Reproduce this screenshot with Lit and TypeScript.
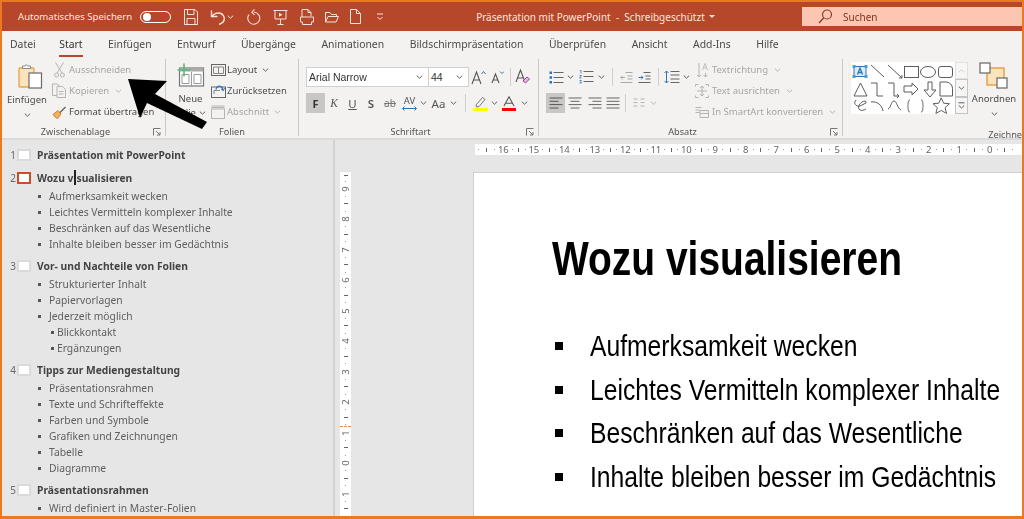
import { LitElement, html, css, svg } from "lit";
import { customElement } from "lit/decorators.js";

const D = "#5c5c5c";
const G = "#b4b4b4";
const ico = (w: number, h: number, body: unknown) =>
  html`<svg class="ico" width=${w} height=${h} viewBox="0 0 ${w} ${h}" fill="none" stroke-width="1">${body}</svg>`;
const caret = (c = D) => ico(7, 4, svg`<path d="M.8.6 3.5 3.2 6.2.6" stroke=${c}/>`);

const W = "#f6e4dc";
const qa = {
  save: ico(14, 16, svg`<path d="M.5.5h10.5l2.500 2.500v12.500H.5z M3.500 1v4.500h6.500V1 M3 15v-5.500h8V15" stroke=${W}/>`),
  undo: ico(17, 16, svg`<path d="M1.500 1.500v6h6 M2 7.500c3-4.500 10-5 12 .5 1 3-1 6-5 7.500" stroke=${W} stroke-width="1.400"/>`),
  redo: ico(14, 16, svg`<path d="M7 3.200a6 6 0 1 1-5 2.400 M7.500.5 4.800 3.200l2.700 2.700" stroke=${W} stroke-width="1.100"/>`),
  show: ico(15, 16, svg`<path d="M.5 1.500h14 M2 1.500v8.500h11V1.500 M7.500 10v5 M4.500 15.500h6" stroke=${W}/><path d="M6 3.800 9.500 5.800 6 7.800z" fill=${W}/>`),
  print: ico(14, 16, svg`<path d="M2 8V.5h6l3 3V7 M8 .5v3h3 M.5 8h13v5h-2v2.500h-9V13h-2z" stroke=${W}/>`),
  open: ico(14, 12, svg`<path d="M.5 11V1.500h4.500l1.500 2h5v2 M.5 11l2.500-5.500h10.500L11 11z" stroke=${W}/>`),
  file: ico(11, 15, svg`<path d="M.5.5h6l4 4v10H.5z M6.500.5v4h4" stroke=${W}/>`),
  more: ico(8, 8, svg`<path d="M1 1h6 M1.500 4l2.500 2.500L6.500 4" stroke=${W}/>`),
  glass: ico(14, 15, svg`<circle cx="9" cy="5.500" r="4.500" stroke="#8a3b25" stroke-width="1.200"/><path d="M5.800 8.800 1 14" stroke="#8a3b25" stroke-width="1.400"/>`),
};

const rib = {
  paste: html`<svg class="ico" width="25" height="25" viewBox="0 0 25 25" fill="none">
    <rect x="1" y="4" width="15" height="19" rx="1" fill="#fbe3bb" stroke="#e6a24a" stroke-width="1.300"/>
    <path d="M4.500 4.500V2H7l1.200-1.500L9.500 2H12.500v2.500z" fill="#fff" stroke="#8a8a8a"/>
    <rect x="11" y="9" width="12.500" height="15" fill="#fff" stroke="#6a6a6a" stroke-width="1.200"/></svg>`,
  cut: ico(11, 16, svg`<path d="M1.500.5 8 11 M9.500.5 3 11" stroke=${G}/><circle cx="2.600" cy="13" r="2" stroke=${G}/><circle cx="8.400" cy="13" r="2" stroke=${G}/>`),
  copy: ico(14, 15, svg`<path d="M.5 1h5l2 2v9.500H.5z" stroke=${G}/><path d="M5 3.500h5.500l3 3v8H5z" fill="#f3f2f1" stroke=${G}/><path d="M7 8.500h4.500M7 11h4.500" stroke=${G}/>`),
  brush: ico(15, 14, svg`<path d="M7 7.500 13 1.500l1 1-6 6z" fill="#666"/><path d="M1 9.500 6 5.500l3 3.500-3.500 4.500C4 13 2 11 1 9.500z" fill="#f3b05e" stroke="#b86f1d" stroke-width=".8"/>`),
  slide: ico(28, 24, svg`<rect x="2.500" y="5" width="24" height="18" fill="#fff" stroke="#777" stroke-width="1.200"/><rect x="2.500" y="5" width="24" height="3.500" fill="#aaa"/><path d="M14.500 9v14M5 11.500h7v9H5zM17 11.500h7v9h-7z" stroke="#9a9a9a"/><path d="M7 .5v13M.5 7h13" stroke="#5fb57c" stroke-width="1.600"/>`),
  layout: ico(15, 12, svg`<rect x=".5" y=".5" width="14" height="11" stroke="#666"/><path d="M2.500 3h10v6.500h-10zM7.500 3v6.500" stroke="#888"/>`),
  reset: ico(15, 14, svg`<rect x=".5" y="3" width="14" height="10.500" stroke="#666"/><path d="M3 10V6.500h6" stroke="#888"/><path d="M5 5.500c0-3 4-4.500 6-2l1 2.500" stroke="#2e75b6" stroke-width="1.300"/><path d="M10 5l2.300 1.800L13.500 4" stroke="#2e75b6"/>`),
  section: ico(14, 14, svg`<rect x=".5" y="4" width="13" height="9.500" stroke=${G}/><path d="M.5 1h13M.5 2.500h13" stroke=${G}/>`),
  grow: ico(15, 15, svg`<path d="M1 14 5.500 2 10 14M2.700 10h5.600" stroke="#555" stroke-width="1.100"/><path d="M10.500 4 12.500 1.500 14.500 4" stroke="#2e75b6"/>`),
  shrink: ico(13, 14, svg`<path d="M1 13 4.500 4 8 13M2.300 10h4.400" stroke="#555" stroke-width="1.100"/><path d="M9 1.500 11 3.500 13 1.500" stroke="#2e75b6"/>`),
  clear: ico(15, 16, svg`<path d="M1 13 5.500 1 10 13M2.700 9h5.600" stroke="#555" stroke-width="1.100"/><path d="M8 12l4-4 2.500 2-4 4z" fill="#e3b6e0" stroke="#a640a0"/>`),
  strike: html`<span class="strike">ab</span>`,
  av: html`<span class="avw"><span>AV</span>${ico(15, 5, svg`<path d="M.5 2.500h14M2.500.5l-2 2 2 2M12.500.5l2 2-2 2" stroke="#2e75b6"/>`)}</span>`,
  hl: ico(15, 15, svg`<path d="M3 9 9.500 1.500l2.500 2L6 10.500 3.500 11z" stroke="#777"/><rect y="12" width="15" height="3" fill="#ffff00"/>`),
  color: ico(14, 15, svg`<path d="M2 10 7 .8l5 9.200M3.600 7.200h6.800" stroke="#555" stroke-width="1.100"/><rect y="12" width="14" height="3" fill="#ff0000"/>`),
  bullets: ico(15, 13, svg`<path d="M4.500 1.500h10M4.500 6.500h10M4.500 11.500h10" stroke="#666"/><path d="M.5.5h2.500v2.500H.5zM.5 5.200h2.500v2.500H.5zM.5 10h2.500v2.500H.5z" fill="#2e75b6"/>`),
  nums: ico(15, 14, svg`<path d="M4.500 1.500h10M4.500 6.500h10M4.500 11.500h10" stroke="#666"/><path d="M.8.5h1.200v3M.5 5.500h2L.5 8h2M.5 10.500h2l-1 1.200 1 1.300h-2" stroke="#2e75b6" stroke-width=".8"/>`),
  dec: ico(13, 11, svg`<path d="M5.500.5h7M7.500 4h5M7.500 7h5M.5 10.500h12" stroke="#aaa"/><path d="M5 5.500H.8M2.500 3.800.8 5.500l1.700 1.700" stroke="#aaa"/>`),
  inc: ico(13, 11, svg`<path d="M5.500.5h7M7.500 4h5M7.500 7h5M.5 10.500h12" stroke="#666"/><path d="M.5 5.500H5M3.300 3.800 5 5.500 3.300 7.200" stroke="#2e75b6"/>`),
  ls: ico(16, 14, svg`<path d="M6.500 1.500h9M6.500 5h9M6.500 9h9M6.500 12.500h9" stroke="#666"/><path d="M2.500 1v12M.5 3l2-2 2 2M.5 11l2 2 2-2" stroke="#2e75b6"/>`),
  td: html`<span class="tdw">${ico(13, 16, svg`<path d="M3 1v14M1 13l2 2 2-2M9.500 11v4M7.500 13l2 2 2-2" stroke=${G}/><path d="M6.500 8 9 1.500 11.500 8M7.400 5.800h3.200" stroke=${G} stroke-width=".8"/>`)}</span>`,
  ta: ico(14, 14, svg`<path d="M.5 2.500V.5h3M10.500.5h3v2M.5 11.500v2h3M10.500 13.500h3v-2M7 2v10M5 4l2-2 2 2M5 10l2 2 2-2M2 7h10" stroke=${G}/>`),
  sa: ico(14, 12, svg`<path d="M.5 1.500h6M.5 4h4M.5 6.500h4" stroke=${G}/><path d="M5 4.500h8.500v7H5zM5 7.500h8.500" stroke=${G}/>`),
  launch: ico(8, 8, svg`<path d="M.5 7.500V.5h7M3 3l4 4M7 4v3H4" stroke="#777"/>`),
  arrange: ico(32, 28, svg`<rect x="9" y="6" width="17" height="17" fill="#fbe3bb" stroke="#e6953a" stroke-width="1.300"/><rect x="2" y="1" width="10" height="10" fill="#fff" stroke="#666" stroke-width="1.200"/><rect x="19" y="16" width="10" height="10" fill="#fff" stroke="#666" stroke-width="1.200"/>`),
};

const gallery = html`<svg class="ico" width="104" height="52" viewBox="0 0 104 52" fill="none" stroke="#5c5c5c">
  <rect width="104" height="52" fill="#fff" stroke="none"/>
  <rect x="3" y="4.500" width="12" height="10" fill="#dcebf7" stroke="#2e75b6"/>
  <path d="M1.500 3h3v3h-3zM13.500 3h3v3h-3zM1.500 13h3v3h-3zM13.500 13h3v3h-3z" fill="#4a9bdc" stroke="none"/>
  <path d="M6.500 12.500 9 6l2.500 6.500M7.400 10.500h3.200" stroke="#2e75b6" stroke-width="1.300"/>
  <path d="M20 3l13 12M37 3l14 13M48 16h3v-3"/>
  <rect x="53.500" y="4.500" width="14" height="11"/>
  <ellipse cx="77" cy="10" rx="7.500" ry="5.500"/>
  <rect x="87.500" y="4.500" width="14" height="11" rx="2.500"/>
  <path d="M3 34 9.500 21 16 34zM20 21h6v13h6M37 21h6v13h5M46 32l2 2-2 2M53 24h8v-3l6 6-6 6v-3h-8zM77 20v8h-4l6 7 6-7h-4v-8zM89 20h6a6.500 6.500 0 0 1 6.500 6.500V34H89z"/>
  <path d="M5 38c-3 3 0 7 4 6l6-3c1-1-1-3-4-1-3 2-5 6-2 8 2 1 4 0 6-1M20 40c6-1 11 3 12 9M37 47c3-1 3-8 6-8s3 7 7 9" />
  <path d="M59 38c-3 0-1 5-2.500 6 1.500 1-.5 6 2.500 6M70 38c3 0 1 5 2.500 6-1.500 1 .5 6-2.500 6"/>
  <path d="M93 37l2.500 5.500 6 .5-4.500 4 1.500 6-5.500-3-5.500 3 1.500-6-4.500-4 6-.5z" transform="scale(.97)"/>
</svg>`;

const OUT = [
  { t: "Präsentation mit PowerPoint" },
  { t: "Wozu visualisieren", cur: true, b: ["Aufmerksamkeit wecken", "Leichtes Vermitteln komplexer Inhalte", "Beschränken auf das Wesentliche", "Inhalte bleiben besser im Gedächtnis"] },
  { t: "Vor- und Nachteile von Folien", b: ["Strukturierter Inhalt", "Papiervorlagen", "Jederzeit möglich"], s: ["Blickkontakt", "Ergänzungen"] },
  { t: "Tipps zur Mediengestaltung", b: ["Präsentationsrahmen", "Texte und Schrifteffekte", "Farben und Symbole", "Grafiken und Zeichnungen", "Tabelle", "Diagramme"] },
  { t: "Präsentationsrahmen", b: ["Wird definiert in Master-Folien"] },
] as { t: string; cur?: boolean; b?: string[]; s?: string[] }[];

const TABS = ["Datei", "Start", "Einfügen", "Entwurf", "Übergänge", "Animationen", "Bildschirmpräsentation", "Überprüfen", "Ansicht", "Add-Ins", "Hilfe"];
const H_NUMS = [16, 15, 14, 13, 12, 11, 10, 9, 8, 7, 6, 5, 4, 3, 2, 1, 0];
const V_NUMS = [9, 8, 7, 6, 5, 4, 3, 2, 1, 0, 1];
const BULLETS = ["Aufmerksamkeit wecken", "Leichtes Vermitteln komplexer Inhalte", "Beschränken auf das Wesentliche", "Inhalte bleiben besser im Gedächtnis"];

type Cell = [number, unknown, string?];
const F2: Cell[] = [
  [19, html`<b class="fb">F</b>`, "on"], [18, html`<i class="gl it">K</i>`], [19, html`<u class="gl">U</u>`], [18, html`<span class="gl sb">S</span>`],
  [20, rib.strike], [19, rib.av], [8, caret()], [23, html`<span class="gl">Aa</span>`], [7, caret()], [16, html`<span class="vs"></span>`],
  [15, rib.hl], [12, caret()], [18, rib.color], [12, caret()],
];
const P1: Cell[] = [
  [20, rib.bullets], [9, caret()], [22, rib.nums], [9, caret()], [12, html`<span class="vs"></span>`], [17, rib.dec], [19, rib.inc],
  [8, html`<span class="vs"></span>`], [20, rib.ls], [9, caret()],
];
const P2: Cell[] = [
  [19, ico(14, 12, svg`<path d="M.5 1h13M.5 4.300h9M.5 7.600h13M.5 11h9" stroke="#555"/>`), "on"],
  [20, ico(14, 12, svg`<path d="M.5 1h13M2.500 4.300h9M.5 7.600h13M2.500 11h9" stroke="#666"/>`)],
  [19, ico(14, 12, svg`<path d="M.5 1h13M4.500 4.300h9M.5 7.600h13M4.500 11h9" stroke="#666"/>`)],
  [17, ico(14, 12, svg`<path d="M.5 1h13M.5 4.300h13M.5 7.600h13M.5 11h13" stroke="#666"/>`)],
  [8, html`<span class="vs"></span>`],
  [20, ico(12, 10, svg`<path d="M.5 1h4M.5 4.500h4M.5 8h4M7.500 1h4M7.500 4.500h4M7.500 8h4" stroke=${G}/>`)],
  [9, caret(G)],
];

@customElement("app-root")
export class AppRoot extends LitElement {
  static styles = css`
    :host {
      display: block; width: 1024px; height: 519px; box-sizing: border-box; overflow: hidden;
      border: 2px solid #e97a22; border-bottom-width: 3px; position: relative;
      font-family: "Noto Sans", "Open Sans", sans-serif; color: #4a4a4a; background: #f3f2f1;
    }
    .blur { filter: blur(0.35px); height: 100%; display: flex; flex-direction: column; }
    .ico { display: block; flex: none; }
    .bar { height: 29px; flex: none; background: #b7472a; display: flex; align-items: center; color: #f9e6de; font-size: 9.600px; padding-left: 16px; }
    .toggle { width: 31px; height: 12px; box-sizing: border-box; margin-left: 8px; border: 1px solid #fff; border-radius: 7px; display: flex; align-items: center; padding-left: 2px; }
    .toggle i { width: 8px; height: 8px; border-radius: 50%; background: #fff; }
    .qi { display: flex; flex: none; }
    .doc { margin-left: 92px; white-space: pre; font-size: 10px; }
    .doc-caret { margin-left: 4px; width: 0; height: 0; border: 3px solid transparent; border-top: 3px solid #f9e6de; border-bottom: 0; }
    .search { margin-left: auto; width: 220px; height: 19px; background: #fcc6b3; color: #7e3420; display: flex; align-items: center; gap: 11px; padding-left: 16px; box-sizing: border-box; font-size: 10px; }
    .tabs { display: flex; height: 28px; flex: none; align-items: flex-start; padding: 4px 0 0 8px; gap: 25.500px; font-size: 10.400px; box-sizing: border-box; }
    .tab { padding: 2px 0 3px; border-bottom: 2px solid transparent; line-height: 15px; white-space: nowrap; }
    .tab:first-child { margin-right: -2px; }
    .tab.on { border-bottom-color: #b7472a; color: #333; }
    .ribbon { display: flex; height: 81px; flex: none; overflow: hidden; border-bottom: 2px solid #dbdad9; box-sizing: border-box; font-size: 9.500px; }
    .group { flex: none; display: flex; flex-direction: column; border-right: 1px solid #c9c8c7; box-sizing: border-box; height: 77px; }
    .g1 { width: 164px; } .g2 { width: 133px; } .g3 { width: 240px; } .g4 { width: 304px; } .g5 { width: 330px; border-right: 0; }
    .body { height: 65px; flex: none; display: flex; }
    .lab { display: flex; align-items: center; height: 14px; padding-top: 1px; font-size: 9.200px; color: #555; }
    .lab span { flex: 1; text-align: center; white-space: nowrap; }
    .launch { width: 16px; display: flex; justify-content: center; }
    .big { display: flex; flex-direction: column; align-items: center; flex: none; line-height: 14px; }
    .col { display: flex; flex-direction: column; flex: none; }
    .row { height: 21px; display: flex; align-items: center; white-space: nowrap; gap: 3px; }
    .row .iw { width: 14px; display: flex; justify-content: center; flex: none; }
    .off { color: #a6a6a6; }
    .row .c { margin-left: 3px; }
    .g1 .body { padding-left: 5px; } .g1 .big { width: 40px; padding: 5px 0 0; } .g1 .col { margin-left: 5px; }
    .pastei { height: 25px; margin: 0 0 4px 6px; }
    .big .mid { margin-top: 6px; }
    .g2 .body { padding-left: 9px; } .g2 .big { width: 31px; padding: 4px 0 0; } .g2 .col { margin-left: 5px; }
    .g2 .row { gap: 2px; }
    .slidei { height: 25px; margin-bottom: 4px; }
    .folie { display: flex; align-items: center; gap: 3px; }
    .stack { display: flex; flex-direction: column; flex: none; padding-top: 8px; gap: 6px; }
    .g3 .stack { padding-left: 7px; } .g4 .stack { padding-left: 7px; width: 142px; }
    .g4 .col { margin-left: 7px; }
    .crow { display: flex; height: 20px; align-items: center; }
    .cell { display: flex; justify-content: center; align-items: center; height: 20px; flex: none; }
    .cell.on { background: #c8c7c6; }
    .sel { height: 20px; background: #fff; box-sizing: border-box; border: 1px solid #d0d0d0; display: flex; align-items: center; justify-content: space-between; padding: 0 5px 0 2px; flex: none; }
    .s1 { width: 123px; } .s2 { width: 40px; border-left: 0; }
    .sel span { font-family: "Liberation Sans", sans-serif; font-size: 10.500px; color: #333; }
    .fb { font-size: 11px; color: #333; }
    .gl { font-size: 11.500px; color: #555; }
    .it { font-family: "Liberation Serif", serif; }
    .sb { font-weight: 600; }
    .strike { font-size: 10px; color: #777; text-decoration: line-through; }
    .avw { display: flex; flex-direction: column; align-items: center; font-size: 9.500px; line-height: 10px; color: #555; }
    .tdw { display: block; }
    .vs { width: 1px; height: 18px; background: #cfcecd; display: block; }
    .g5 .body { padding: 3px 0 0 8px; }
    .gal { width: 117px; height: 52px; display: flex; flex: none; }
    .scroll { width: 13px; display: flex; flex-direction: column; flex: none; }
    .scroll div { flex: 1; border: 1px solid #c4c4c4; display: flex; align-items: center; justify-content: center; box-sizing: border-box; background: #f6f6f6; }
    .scroll .up { border-color: #e0e0e0; }
    .arr { width: 48px; margin-left: 2px; }
    .arri { height: 28px; margin-bottom: 2px; }
    .main { flex: 1; min-height: 0; display: flex; background: #e6e6e6; overflow: hidden; }
    .outline { width: 333px; flex: none; box-sizing: border-box; padding: 7px 0 0 7px; border-right: 2px solid #d2d2d2; display: flex; flex-direction: column; gap: 6px; font-size: 10.300px; color: #5f5f5f; }
    .outline > div:nth-child(2) { margin-top: 1px; }
    .head { display: flex; align-items: center; height: 16px; position: relative; }
    .num { width: 8px; text-align: center; color: #6a6a6a; font-size: 10px; }
    .thumb { width: 10px; height: 8px; border: 2px solid #dadada; background: #fff; flex: none; margin-right: 6px; }
    .thumb.cur { border-color: #d24a26; }
    .ttl { font-weight: 700; color: #444; white-space: nowrap; }
    .bl { margin: 2px 0 0 29px; display: flex; flex-direction: column; }
    .li { height: 16px; display: flex; align-items: center; gap: 8px; white-space: nowrap; }
    .li::before { content: ""; width: 3px; height: 3px; background: #555; flex: none; }
    .sub { padding-left: 13px; gap: 3px; }
    .beam { position: absolute; left: 65px; top: 0; width: 1.500px; height: 15px; background: #222; }
    .editor { flex: 1; min-width: 0; display: grid; grid-template-columns: 11px 1fr; grid-template-rows: 11px 1fr; column-gap: 122px; row-gap: 17px; padding: 4px 0 0 5px; box-sizing: border-box; overflow: hidden; }
    .hr { grid-column: 2; margin-left: 2px; background: #fff; display: flex; overflow: hidden; }
    .vr { grid-column: 1; grid-row: 2; background: #fff; display: flex; flex-direction: column; overflow: hidden; position: relative; }
    .rc { flex: none; width: 30.500px; height: 11px; line-height: 11px; display: grid; grid-template-columns: repeat(4, 1fr); align-items: center; justify-items: center; font-size: 9.500px; color: #666; }
    .rc.part { width: 22.875px; grid-template-columns: repeat(3, 1fr); }
    .rc i { display: block; }
    .dot { width: 1px; height: 1px; background: #999; }
    .tick { width: 1px; height: 4px; background: #666; }
    .vc { flex: none; height: 30.500px; width: 11px; display: grid; grid-template-rows: repeat(4, 1fr); align-items: center; justify-items: center; font-size: 9.500px; line-height: 8px; color: #666; }
    .vc.part { height: 12.500px; grid-template-rows: 1fr 1fr; }
    .vc i { display: block; }
    .vc .tick { width: 4px; height: 1px; }
    .vc b { font-weight: 400; transform: rotate(-90deg); line-height: 8px; display: block; }
    .pos { position: absolute; left: 0; right: 0; top: 254px; border-top: 1px dashed #f08a50; }
    .slide { grid-column: 2; background: #fff; border: 1px solid #cfcfcf; border-width: 1px 0 0 1px; padding: 47px 0 0 78px; min-height: 0; color: #000; font-family: "Liberation Sans", sans-serif; overflow: hidden; }
    h1 { margin: 0; font-size: 47.500px; line-height: 78px; font-weight: 700; white-space: nowrap; height: 78px; }
    .nar { display: block; flex: none; width: max-content; white-space: nowrap; transform: scaleX(0.82); transform-origin: left center; }
    ul { list-style: none; margin: 26.500px 0 0; padding: 0; display: flex; flex-direction: column; }
    li.bu { height: 43.500px; font-size: 30.100px; display: flex; align-items: center; white-space: nowrap; }
    li.bu::before { content: ""; width: 8px; height: 8px; background: #000; margin: 0 27px 0 3px; flex: none; }
    .arrow { position: absolute; left: 0; top: 0; pointer-events: none; }
  `;

  small(icon: unknown, text: string, off = false, cr = false) {
    return html`<div class="row ${off ? "off" : ""}"><span class="iw">${icon}</span><span>${text}</span>${cr ? html`<span class="c">${caret(off ? G : D)}</span>` : ""}</div>`;
  }
  cells(list: Cell[]) {
    return list.map(([w, c, k]) => html`<span class="cell ${k ?? ""}" style="width:${w}px">${c}</span>`);
  }
  label(t: string, launch = true) {
    return html`<div class="lab"><span>${t}</span>${launch ? html`<div class="launch">${rib.launch}</div>` : ""}</div>`;
  }

  render() {
    const quick: [unknown, number][] = [[qa.save, 13], [qa.undo, 12], [caret(W), 0], [qa.redo, 13], [qa.show, 12], [qa.print, 12], [qa.open, 11], [qa.file, 11], [qa.more, 15]];
    return html`<div class="blur">
      <div class="bar">
        <span>Automatisches Speichern</span>
        <span class="toggle"><i></i></span>
        ${quick.map(([i, m]) => html`<span class="qi" style="margin-left:${m}px">${i}</span>`)}
        <span class="doc">Präsentation mit PowerPoint  -  Schreibgeschützt</span><span class="doc-caret"></span>
        <div class="search">${qa.glass}<span>Suchen</span></div>
      </div>
      <div class="tabs">${TABS.map((t) => html`<span class="tab ${t === "Start" ? "on" : ""}">${t}</span>`)}</div>
      <div class="ribbon">
        <section class="group g1">
          <div class="body">
            <div class="big"><span class="pastei">${rib.paste}</span><span>Einfügen</span><span class="mid">${caret()}</span></div>
            <div class="col">${this.small(rib.cut, "Ausschneiden", true)}${this.small(rib.copy, "Kopieren", true, true)}${this.small(rib.brush, "Format übertragen")}</div>
          </div>
          ${this.label("Zwischenablage")}
        </section>
        <section class="group g2">
          <div class="body">
            <div class="big"><span class="slidei">${rib.slide}</span><span>Neue</span><span class="folie">Folie ${caret()}</span></div>
            <div class="col">${this.small(rib.layout, "Layout", false, true)}${this.small(rib.reset, "Zurücksetzen")}${this.small(rib.section, "Abschnitt", true, true)}</div>
          </div>
          ${this.label("Folien", false)}
        </section>
        <section class="group g3">
          <div class="body"><div class="stack">
            <div class="crow">
              <div class="sel s1"><span>Arial Narrow</span>${caret()}</div>
              <div class="sel s2"><span>44</span>${caret()}</div>
              <span class="cell" style="width:19px">${rib.grow}</span>
              <span class="cell" style="width:18px">${rib.shrink}</span>
              <span class="cell" style="width:8px"><span class="vs"></span></span>
              <span class="cell" style="width:17px">${rib.clear}</span>
            </div>
            <div class="crow">${this.cells(F2)}</div>
          </div></div>
          ${this.label("Schriftart")}
        </section>
        <section class="group g4">
          <div class="body">
            <div class="stack"><div class="crow">${this.cells(P1)}</div><div class="crow">${this.cells(P2)}</div></div>
            <div class="col">${this.small(rib.td, "Textrichtung", true, true)}${this.small(rib.ta, "Text ausrichten", true, true)}${this.small(rib.sa, "In SmartArt konvertieren", true, true)}</div>
          </div>
          ${this.label("Absatz")}
        </section>
        <section class="group g5">
          <div class="body">
            <div class="gal">${gallery}<div class="scroll">
              <div class="up">${ico(7, 4, svg`<path d="M.8 3.400 3.500.8 6.200 3.400" stroke="#ccc"/>`)}</div>
              <div>${caret()}</div>
              <div>${ico(7, 7, svg`<path d="M.5.8h6M.8 3.500 3.500 6 6.200 3.500" stroke=${D}/>`)}</div>
            </div></div>
            <div class="big arr"><span class="arri">${rib.arrange}</span><span>Anordnen</span><span class="mid">${caret()}</span></div>
          </div>
          ${this.label("Zeichnen", false)}
        </section>
      </div>
      <div class="main">
        <div class="outline">
          ${OUT.map((o, i) => html`<div>
            <div class="head">
              <span class="num">${i + 1}</span><span class="thumb ${o.cur ? "cur" : ""}"></span><span class="ttl">${o.t}</span>
              ${o.cur ? html`<span class="beam"></span>` : ""}
            </div>
            ${o.b ? html`<div class="bl">
              ${o.b.map((x) => html`<div class="li">${x}</div>`)}
              ${(o.s ?? []).map((x) => html`<div class="li sub">${x}</div>`)}
            </div>` : ""}
          </div>`)}
        </div>
        <div class="editor">
          <div class="hr">
            <div class="rc part"><i class="dot"></i><i class="tick"></i><i class="dot"></i></div>
            ${H_NUMS.map((n) => html`<div class="rc"><span>${n}</span><i class="dot"></i><i class="tick"></i><i class="dot"></i></div>`)}
          </div>
          <div class="vr">
            <div class="vc part"><i class="tick"></i><i class="dot"></i></div>
            ${V_NUMS.map((n) => html`<div class="vc"><b>${n}</b><i class="dot"></i><i class="tick"></i><i class="dot"></i></div>`)}
            <div class="pos"></div>
          </div>
          <div class="slide">
            <h1><span class="nar">Wozu visualisieren</span></h1>
            <ul>${BULLETS.map((b) => html`<li class="bu"><span class="nar">${b}</span></li>`)}</ul>
          </div>
        </div>
      </div>
      <svg class="arrow" width="1020" height="200" viewBox="0 0 1020 200">
        <path d="M126 77 165 79 153 92 205 120 200 127 145 101 138 116z" fill="#000"/>
      </svg>
    </div>`;
  }
}
